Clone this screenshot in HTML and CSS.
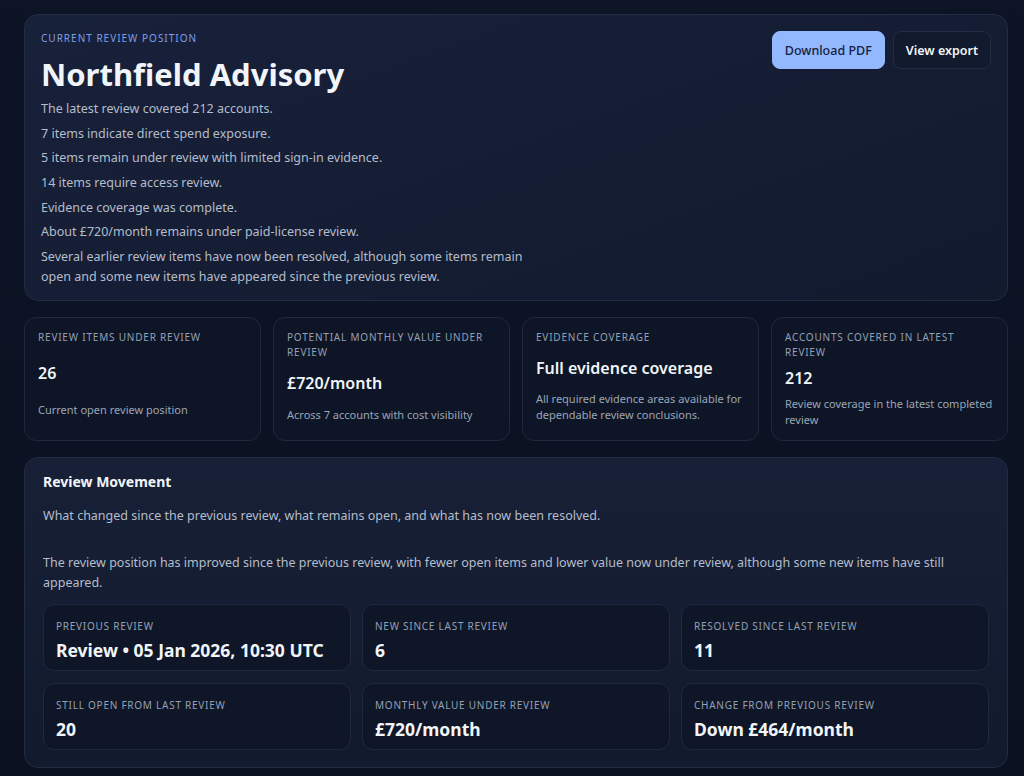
FILE: index.html
```html
<!DOCTYPE html>
<html lang="en">
<head>
    <meta charset="UTF-8">
    <meta name="viewport" content="width=device-width, initial-scale=1.0">
    <title>Northfield Advisory - Review Position</title>
    <link rel="stylesheet" href="styles.css">
</head>
<body>
    <main class="page">
        <!-- Current position -->
        <section class="hero">
            <div class="hero-text">
                <p class="eyebrow">Current review position</p>
                <h1>Northfield Advisory</h1>
                <div class="summary">
                    <p>The latest review covered 212 accounts.</p>
                    <p>7 items indicate direct spend exposure.</p>
                    <p>5 items remain under review with limited sign-in evidence.</p>
                    <p>14 items require access review.</p>
                    <p>Evidence coverage was complete.</p>
                    <p>About £720/month remains under paid-license review.</p>
                    <p>Several earlier review items have now been resolved, although some items remain open and some new items have appeared since the previous review.</p>
                </div>
            </div>
            <div class="actions">
                <button class="btn btn-primary">Download PDF</button>
                <button class="btn btn-ghost">View export</button>
            </div>
        </section>

        <!-- Headline figures -->
        <section class="stats">
            <div class="stat">
                <div class="stat-label">Review items under review</div>
                <div class="stat-value">26</div>
                <div class="stat-note">Current open review position</div>
            </div>
            <div class="stat">
                <div class="stat-label">Potential monthly value under review</div>
                <div class="stat-value">£720/month</div>
                <div class="stat-note">Across 7 accounts with cost visibility</div>
            </div>
            <div class="stat">
                <div class="stat-label">Evidence coverage</div>
                <div class="stat-value">Full evidence coverage</div>
                <div class="stat-note">All required evidence areas available for dependable review conclusions.</div>
            </div>
            <div class="stat">
                <div class="stat-label">Accounts covered in latest review</div>
                <div class="stat-value">212</div>
                <div class="stat-note">Review coverage in the latest completed review</div>
            </div>
        </section>

        <!-- Movement since previous review -->
        <section class="movement">
            <h2>Review Movement</h2>
            <p class="movement-intro">What changed since the previous review, what remains open, and what has now been resolved.</p>
            <p class="movement-summary">The review position has improved since the previous review, with fewer open items and lower value now under review, although some new items have still appeared.</p>
            <div class="tiles">
                <div class="tile">
                    <div class="tile-label">Previous review</div>
                    <div class="tile-value">Review • 05 Jan 2026, 10:30 UTC</div>
                </div>
                <div class="tile">
                    <div class="tile-label">New since last review</div>
                    <div class="tile-value">6</div>
                </div>
                <div class="tile">
                    <div class="tile-label">Resolved since last review</div>
                    <div class="tile-value">11</div>
                </div>
                <div class="tile">
                    <div class="tile-label">Still open from last review</div>
                    <div class="tile-value">20</div>
                </div>
                <div class="tile">
                    <div class="tile-label">Monthly value under review</div>
                    <div class="tile-value">£720/month</div>
                </div>
                <div class="tile">
                    <div class="tile-label">Change from previous review</div>
                    <div class="tile-value">Down £464/month</div>
                </div>
            </div>
        </section>
    </main>
</body>
</html>
```

FILE: styles.css
```css
/* Page */
body {
    margin: 0;
    font-family: 'Noto Sans', 'Open Sans', sans-serif;
    background: linear-gradient(180deg, #0d1426 0%, #0b1120 100%);
    color: #e2e8f0;
    min-height: 100vh;
}

.page {
    padding: 14px 16px 10px 24px;
    display: flex;
    flex-direction: column;
    gap: 16px;
}

/* Hero */
.hero {
    display: flex;
    justify-content: space-between;
    align-items: flex-start;
    padding: 16px 16px 8px 16px;
    background: linear-gradient(160deg, #18213a 0%, #121a2e 100%);
    border: 1px solid #222c44;
    border-radius: 14px;
}

.eyebrow {
    margin: 0;
    font-size: 10px;
    line-height: 14px;
    letter-spacing: 1px;
    text-transform: uppercase;
    color: #7f9ee6;
}

h1 {
    margin: 10px 0 6px;
    font-size: 31px;
    line-height: 38px;
    font-weight: 700;
    color: #f1f5f9;
}

.summary {
    max-width: 500px;
}

.summary p {
    margin: 0 0 4.7px;
    font-size: 12.5px;
    line-height: 20px;
    color: #b4bdcc;
}

.actions {
    display: flex;
    gap: 8px;
}

.btn {
    font-family: inherit;
    font-size: 12.5px;
    font-weight: 600;
    height: 38px;
    padding: 0 12px;
    border-radius: 8px;
    cursor: pointer;
}

.btn-primary {
    background: #93b8fd;
    color: #14213d;
    font-weight: 500;
    border: 1px solid #93b8fd;
}

.btn-ghost {
    background: #121a2d;
    color: #f1f5f9;
    border: 1px solid #222c43;
}

/* Stat cards */
.stats {
    display: grid;
    grid-template-columns: repeat(4, 1fr);
    gap: 12px;
}

.stat {
    display: grid;
    gap: 6px;
    padding: 12px 12px 11px 13px;
    background: #0e1526;
    border: 1px solid #1f293e;
    border-radius: 12px;
}

.stat-label {
    font-size: 10px;
    line-height: 15px;
    letter-spacing: 0.8px;
    text-transform: uppercase;
    color: #94a0b4;
}

.stat-value {
    font-size: 16px;
    line-height: 24px;
    font-weight: 600;
    color: #f1f5f9;
}

.stat-note {
    font-size: 11px;
    line-height: 16.5px;
    color: #9aa5b7;
}

/* Review movement */
.movement {
    padding: 14px 18px 17px 18px;
    background: linear-gradient(180deg, #172036 0%, #121a2d 100%);
    border: 1px solid #222c43;
    border-radius: 14px;
}

h2 {
    margin: 0;
    font-size: 14px;
    line-height: 20px;
    font-weight: 700;
    color: #f1f5f9;
}

.movement-intro {
    margin: 14px 0 0;
    font-size: 12.5px;
    line-height: 20px;
    color: #b4bdcc;
}

.movement-summary {
    margin: 27px 0 11px;
    font-size: 12.5px;
    line-height: 20px;
    color: #b4bdcc;
}

.tiles {
    display: grid;
    grid-template-columns: repeat(3, 1fr);
    gap: 12px 11px;
}

.tile {
    padding: 13px 12px 8px;
    background: #0f1628;
    border: 1px solid #1f293e;
    border-radius: 11px;
}

.tile-label {
    font-size: 10px;
    line-height: 16px;
    letter-spacing: 0.75px;
    text-transform: uppercase;
    color: #94a0b4;
}

.tile-value {
    margin-top: 4px;
    font-size: 17.5px;
    line-height: 24px;
    font-weight: 700;
    color: #f1f5f9;
}
```
